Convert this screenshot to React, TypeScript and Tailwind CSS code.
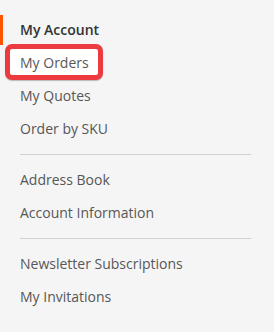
import React from "react";

const font = { fontFamily: '"Open Sans", "Noto Sans", sans-serif' };

function Item({ label, current }: { label: string; current?: boolean }) {
  if (current) {
    return (
      <li className="mt-[3px]">
        <strong className="block border-l-[3px] border-[#ff5501] pl-[17px] pr-[18px] py-[5px] text-[14px] leading-[20px] font-semibold text-[#333333]">
          {label}
        </strong>
      </li>
    );
  }
  return (
    <li className="mt-[3px]">
      <a className="block border-l-[3px] border-transparent pl-[17px] pr-[18px] py-[5px] text-[14px] leading-[20px] text-[#575757]">
        {label}
      </a>
    </li>
  );
}

function Delimiter() {
  return (
    <li className="mt-[3px]">
      <span className="block border-t border-[#d1d1d1] ml-[20px] mr-[23px] my-[10px]" />
    </li>
  );
}

export default function App() {
  return (
    <div className="w-[274px] h-[332px] bg-[#f5f5f5] pt-[12px]" style={font}>
      <ul className="relative">
        <Item label="My Account" current />
        <li className="mt-[3px] relative">
          <div className="absolute left-[5px] top-[-4px] w-[98px] h-[36px] rounded-[7px] border-[5px] border-[#ec3b3f] bg-white shadow-[0_1px_1px_rgba(0,0,0,0.25)]" />
          <a className="relative block border-l-[3px] border-transparent pl-[17px] pr-[18px] py-[5px] text-[14px] leading-[20px] text-[#575757]">
            My Orders
          </a>
        </li>
        <Item label="My Quotes" />
        <Item label="Order by SKU" />
        <Delimiter />
        <Item label="Address Book" />
        <Item label="Account Information" />
        <Delimiter />
        <Item label="Newsletter Subscriptions" />
        <Item label="My Invitations" />
      </ul>
    </div>
  );
}
